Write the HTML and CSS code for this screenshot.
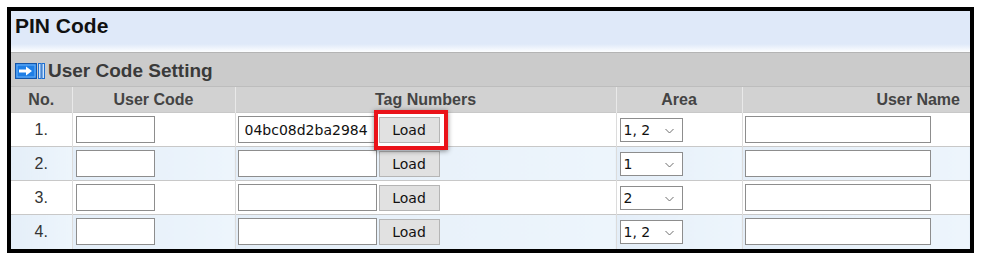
FILE: index.html
```html
<!DOCTYPE html>
<html lang="en">
<head>
    <meta charset="UTF-8">
    <title>PIN Code</title>
    <link rel="stylesheet" href="styles.css">
</head>
<body>
    <div class="frame">
        <div class="page-title">PIN Code</div>

        <div class="section-bar">
            <svg class="section-icon" width="30" height="16" viewBox="0 0 30 16">
                <rect x="0.5" y="0.5" width="21" height="15" fill="#1f7fe6" stroke="#1455a8"/>
                <rect x="2" y="2" width="18" height="12" fill="none" stroke="#6fb2f5" stroke-width="1"/>
                <path d="M4 6.5 H11 V3.5 L17 8 L11 12.5 V9.5 H4 Z" fill="#fff"/>
                <rect x="23.5" y="0.5" width="2.5" height="15" fill="#cfe4fb" stroke="#1f6fd0"/>
                <rect x="27" y="0.5" width="2.5" height="15" fill="#cfe4fb" stroke="#1f6fd0"/>
            </svg>
            <span>User Code Setting</span>
        </div>

        <table class="code-table">
            <colgroup>
                <col class="col-no">
                <col class="col-code">
                <col class="col-tag">
                <col class="col-area">
                <col class="col-name">
            </colgroup>
            <thead>
                <tr>
                    <th>No.</th>
                    <th>User Code</th>
                    <th>Tag Numbers</th>
                    <th>Area</th>
                    <th class="th-name">User Name</th>
                </tr>
            </thead>
            <tbody>
                <tr>
                    <td class="num">1.</td>
                    <td><input class="code-input" type="text"></td>
                    <td>
                        <div class="tag-cell">
                            <input class="tag-input" type="text" value="04bc08d2ba2984">
                            <span class="highlight"><button class="load-btn">Load</button></span>
                        </div>
                    </td>
                    <td>
                        <span class="area-select">
                            <select><option>1, 2</option><option>1</option><option>2</option></select>
                            <svg class="chevron" width="9" height="6" viewBox="0 0 9 6"><path d="M0.5 1 L4.5 5 L8.5 1" fill="none" stroke="#6e6e6e" stroke-width="1"/></svg>
                        </span>
                    </td>
                    <td><input class="name-input" type="text"></td>
                </tr>
                <tr class="alt">
                    <td class="num">2.</td>
                    <td><input class="code-input" type="text"></td>
                    <td>
                        <div class="tag-cell">
                            <input class="tag-input" type="text">
                            <button class="load-btn">Load</button>
                        </div>
                    </td>
                    <td>
                        <span class="area-select">
                            <select><option>1</option><option>2</option><option>1, 2</option></select>
                            <svg class="chevron" width="9" height="6" viewBox="0 0 9 6"><path d="M0.5 1 L4.5 5 L8.5 1" fill="none" stroke="#6e6e6e" stroke-width="1"/></svg>
                        </span>
                    </td>
                    <td><input class="name-input" type="text"></td>
                </tr>
                <tr>
                    <td class="num">3.</td>
                    <td><input class="code-input" type="text"></td>
                    <td>
                        <div class="tag-cell">
                            <input class="tag-input" type="text">
                            <button class="load-btn">Load</button>
                        </div>
                    </td>
                    <td>
                        <span class="area-select">
                            <select><option>2</option><option>1</option><option>1, 2</option></select>
                            <svg class="chevron" width="9" height="6" viewBox="0 0 9 6"><path d="M0.5 1 L4.5 5 L8.5 1" fill="none" stroke="#6e6e6e" stroke-width="1"/></svg>
                        </span>
                    </td>
                    <td><input class="name-input" type="text"></td>
                </tr>
                <tr class="alt">
                    <td class="num">4.</td>
                    <td><input class="code-input" type="text"></td>
                    <td>
                        <div class="tag-cell">
                            <input class="tag-input" type="text">
                            <button class="load-btn">Load</button>
                        </div>
                    </td>
                    <td>
                        <span class="area-select">
                            <select><option>1, 2</option><option>1</option><option>2</option></select>
                            <svg class="chevron" width="9" height="6" viewBox="0 0 9 6"><path d="M0.5 1 L4.5 5 L8.5 1" fill="none" stroke="#6e6e6e" stroke-width="1"/></svg>
                        </span>
                    </td>
                    <td><input class="name-input" type="text"></td>
                </tr>
            </tbody>
        </table>
    </div>
</body>
</html>
```

FILE: styles.css
```css
* {
    margin: 0;
    padding: 0;
    box-sizing: border-box;
}

body {
    font-family: "Liberation Sans", Arial, sans-serif;
    background: #fff;
    color: #333;
    padding: 7px;
}

.frame {
    width: 967px;
    height: 246px;
    border: 4px solid #000;
    overflow: hidden;
    background: #fff;
}

.page-title {
    height: 42px;
    padding: 0 4px;
    line-height: 29px;
    font-size: 21px;
    font-weight: bold;
    color: #111;
    background: linear-gradient(to bottom, #dfe9f9 0, #dfe9f9 33px, #fdfeff 41px);
    border-bottom: 1px solid #b4b4b4;
}

.section-bar {
    height: 33px;
    display: flex;
    align-items: center;
    gap: 3px;
    padding: 2px 4px 0;
    background: #cbcbcb;
    font-size: 19px;
    font-weight: bold;
    color: #3a3a3a;
}

.section-icon {
    flex: none;
}

.code-table {
    width: 959px;
    border-collapse: collapse;
    table-layout: fixed;
}

.col-no { width: 61px; }
.col-code { width: 163px; }
.col-tag { width: 381px; }
.col-area { width: 126px; }
.col-name { width: 228px; }

.code-table th {
    height: 26px;
    background: #d2d2d2;
    border-top: 1px solid #bdbdbd;
    border-left: 1px solid #e9e9e9;
    font-size: 16px;
    font-weight: bold;
    color: #444;
    text-align: center;
    padding-top: 1px;
}

.code-table th:first-child {
    border-left: none;
}

.code-table th.th-name {
    text-align: right;
    padding-right: 10px;
}

.code-table td {
    height: 34px;
    border-top: 1px solid #c8c8c8;
    border-left: 1px solid #dcdcdc;
    padding: 0 2px;
    vertical-align: middle;
}

.code-table td:first-child {
    border-left: none;
}

.code-table tr.alt td {
    background: linear-gradient(to right, #e4eef8, #edf5fc);
}

.code-table td.num {
    text-align: center;
    font-size: 16px;
    color: #333;
    padding-top: 1px;
}

input[type="text"] {
    display: block;
    height: 27px;
    border: 1px solid #8d8d8d;
    background: #fff;
    font-family: "DejaVu Sans", sans-serif;
    font-size: 14px;
    color: #111;
    padding: 0 6px;
}

.code-input {
    width: 79px;
    margin-left: 1px;
}

.tag-cell {
    display: flex;
    align-items: center;
    gap: 2px;
}

.tag-input {
    width: 139px;
}

.load-btn {
    display: block;
    width: 61px;
    height: 26px;
    border: 1px solid #b5b5b5;
    background: #e1e1e1;
    font-family: "DejaVu Sans", sans-serif;
    font-size: 14px;
    color: #111;
}

.highlight {
    position: relative;
    display: block;
}

.highlight::after {
    content: "";
    position: absolute;
    top: -7px;
    left: -5px;
    right: -8px;
    bottom: -7px;
    border: 4px solid #ea1219;
    box-shadow: 0 1px 5px rgba(0, 0, 0, 0.45);
}

.area-select {
    position: relative;
    display: inline-block;
    margin-left: 1px;
    vertical-align: middle;
}

.area-select select {
    display: block;
    appearance: none;
    -webkit-appearance: none;
    width: 63px;
    height: 24px;
    border: 1px solid #8d8d8d;
    border-radius: 0;
    background: #fff;
    font-family: "DejaVu Sans", sans-serif;
    font-size: 14px;
    color: #111;
    padding: 0 3px;
}

.chevron {
    position: absolute;
    right: 9px;
    top: 10px;
    pointer-events: none;
}

.name-input {
    width: 186px;
}
```
